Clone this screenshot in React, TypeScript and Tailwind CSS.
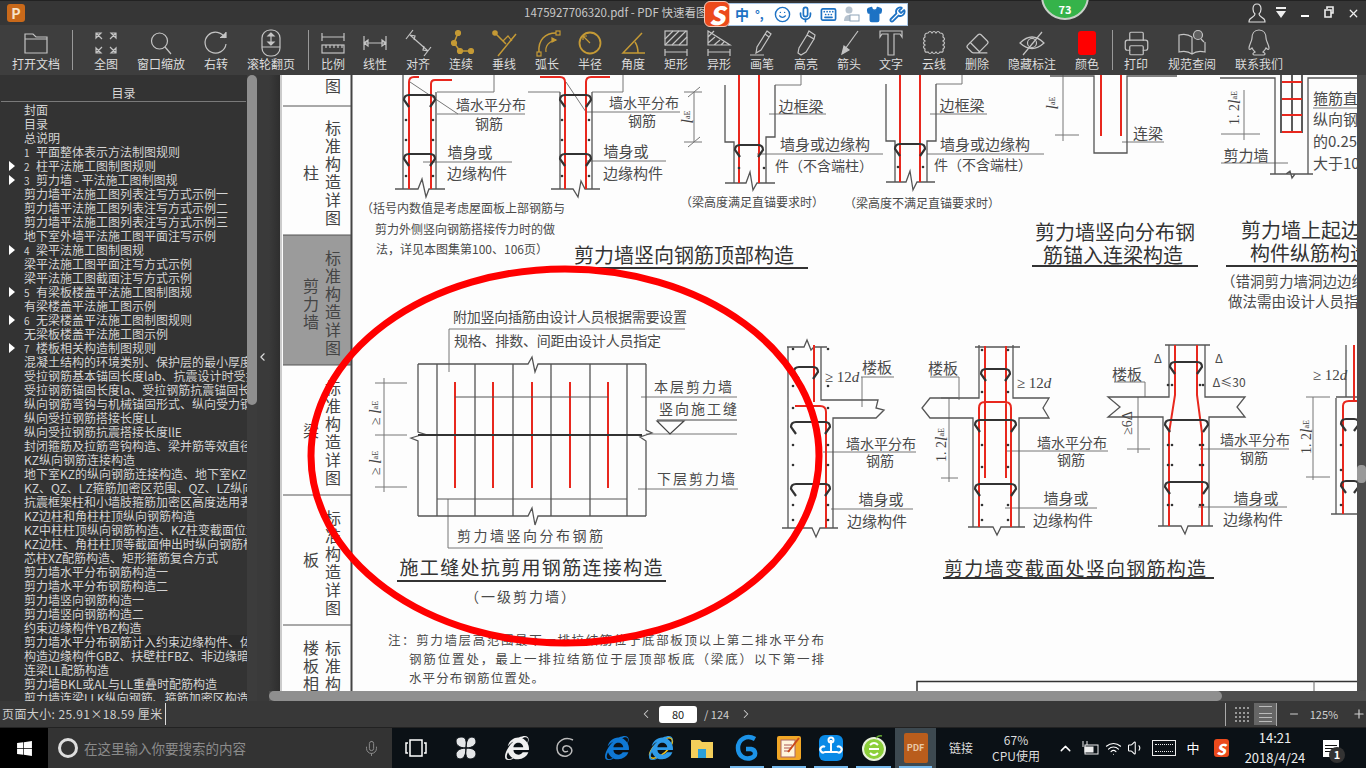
import React from 'react';
import {
  ChevronLeft, ChevronRight, ChevronUp, Eraser, Keyboard, Mic, Minus, Plus, Printer, Shirt, Smile, Volume1, Wifi, Wrench, X,
} from 'lucide-react';
import { FaInternetExplorer, FaWindows } from 'react-icons/fa';

const GOLD = '#c59a35';
const SERIF = 'Liberation Serif';

type IconProps = { children: React.ReactNode; color?: string };

function Ico({ children, color = '#c4c4c4' }: IconProps) {
  return (
    <svg width="30" height="30" viewBox="0 0 30 30" fill="none" stroke={color} strokeWidth="1.2">
      {children}
    </svg>
  );
}

const toolbarLeft: { label: string; w: string; icon: React.ReactNode }[] = [
  { label: '全图', w: 'w-[56px] ml-[5px]', icon: <Ico><path d="M5 5l6 6M5 5v5l5-5zM25 5l-6 6M25 5v5l-5-5zM5 25l6-6M5 25v-5l5 5zM25 25l-6-6M25 25v-5l-5 5z" /></Ico> },
  { label: '窗口缩放', w: 'w-[54px]', icon: <Ico><circle cx="13.500" cy="13" r="8" /><path d="M19 19l6 7" /></Ico> },
  { label: '右转', w: 'w-[56px]', icon: <Ico><path d="M24 10a10.500 10.500 0 1 0 1 6" /><path d="M19 9.500h6V4" fill="#c4c4c4" /></Ico> },
  { label: '滚轮翻页', w: 'w-[54px]', icon: <Ico><rect x="6" y="2" width="18" height="26" rx="8" /><path d="M6 19h18M15 7v8" /><path d="M15 5l-3 3h6zM15 17l-3-3h6z" fill="#c4c4c4" /></Ico> },
];

const toolbarMid: { label: string; w: string; icon: React.ReactNode }[] = [
  { label: '比例', w: 'w-[42px] ml-[3px]', icon: <Ico><path d="M4 5v8M26 5v8M4 9h22" /><rect x="4" y="17" width="22" height="8" /><path d="M8 17v3M12 17v3M16 17v3M20 17v3M24 17v3" /></Ico> },
  { label: '线性', w: 'w-[42px]', icon: <Ico><path d="M4 8v14M26 8v14M4 15h22M4 15l4-3v6zM26 15l-4-3v6z" /></Ico> },
  { label: '对齐', w: 'w-[44px]', icon: <Ico><path d="M10 2L3 11M28 19l-7 9M7 7l18 16M7 7l5 1-1 4M25 23l-5-1 1-4" /></Ico> },
  { label: '连续', w: 'w-[42px]', icon: <Ico color={GOLD}><path d="M12 5L8 15l6 8h11" strokeWidth="1.500" /><g fill={GOLD}><circle cx="12" cy="5" r="2.500" /><circle cx="8" cy="15" r="2.500" /><circle cx="14" cy="23" r="2.500" /><circle cx="25" cy="23" r="2.500" /></g></Ico> },
  { label: '垂线', w: 'w-[44px]', icon: <Ico color={GOLD}><path d="M27 6L9 28M6 5l11 11" strokeWidth="1.500" /><path d="M14 13l5-5 4 5" /><circle cx="6" cy="5" r="2.200" fill={GOLD} /></Ico> },
  { label: '弧长', w: 'w-[42px]', icon: <Ico color={GOLD}><path d="M7 24C6 12 13 5 24 5" strokeWidth="1.500" /><path d="M14 24c-1-6 3-11 10-12" /><rect x="5" y="24" width="4" height="4" /><rect x="24" y="3" width="4" height="4" /><path d="M24 12l-4-2v4z" fill={GOLD} /></Ico> },
  { label: '半径', w: 'w-[44px]', icon: <Ico color={GOLD}><circle cx="15" cy="15" r="10.500" strokeWidth="1.800" /><path d="M15 15L8 8M8 8v4M8 8h4" /></Ico> },
  { label: '角度', w: 'w-[42px]', icon: <Ico color={GOLD}><path d="M24 5L5 25h22M17 14c2 3 3 6 3 11" strokeWidth="1.500" /></Ico> },
  { label: '矩形', w: 'w-[44px]', icon: <Ico><rect x="4" y="3" width="22" height="14" /><path d="M4 11l8-8M4 17L18 3M11 17L25 3M18 17l8-8M4 21v7M26 21v7M4 24h22" /></Ico> },
  { label: '异形', w: 'w-[42px]', icon: <Ico><path d="M4 3l22 14H4zM4 9l6-6M4 15l7-6M10 17l6-5M17 17l3-3M4 21v7M26 21v7M4 24h22" /></Ico> },
  { label: '画笔', w: 'w-[44px]', icon: <Ico><path d="M20 3l4 3-10 16-5 3 1-6zM18 6l4 3M3 27h14" /></Ico> },
  { label: '高亮', w: 'w-[44px]', icon: <Ico><path d="M16 7l7 4-8 13-5 3-3-2 1-5zM18 3l6 4-1 4-7-4z" /></Ico> },
  { label: '箭头', w: 'w-[42px]', icon: <Ico><path d="M24 3L11 21" /><path d="M8 26l2-8 5 4z" fill="#c4c4c4" /></Ico> },
  { label: '文字', w: 'w-[42px]', icon: <Ico><path d="M4 3h22v6l-2-3h-6v21h-6V6H6L4 9z" /></Ico> },
  { label: '云线', w: 'w-[44px]', icon: <Ico><path d="M9 5q2-3 4 0q2-3 4 0q2-3 4 0q4 0 3 4q3 2 0 4q3 2 0 4q3 2 0 4q1 4-3 3q-2 3-4 0q-2 3-4 0q-2 3-4 0q-4 1-3-3q-3-2 0-4q-3-2 0-4q-3-2 0-4q-1-4 3-4z" /></Ico> },
  { label: '删除', w: 'w-[42px]', icon: <span className="flex h-[30px] w-[30px] items-center justify-center text-[#c4c4c4]"><Eraser size={25} strokeWidth={1.2} /></span> },
  { label: '隐藏标注', w: 'w-[68px]', icon: <Ico><path d="M3 15q12-12 24 0q-12 11-24 0z" /><circle cx="15" cy="15" r="4.500" /><path d="M25 4L6 27" /></Ico> },
  { label: '颜色', w: 'w-[42px]', icon: <span className="mt-[3px] block h-[24px] w-[18px] rounded-[3px] bg-[#ff0000]" /> },
];

const toolbarRight: { label: string; w: string; icon: React.ReactNode }[] = [
  { label: '打印', w: 'w-[46px]', icon: <span className="flex h-[30px] w-[30px] items-center justify-center text-[#c4c4c4]"><Printer size={27} strokeWidth={1.1} /></span> },
  { label: '规范查阅', w: 'w-[66px]', icon: <Ico><path d="M15 9C11 6 6 6 2 7v17c4-1 9-1 13 2 4-3 9-3 13-2V14M15 9v17" /><circle cx="21" cy="7" r="4.500" fill="#c4c4c4" fillOpacity=".25" /><path d="M24 11l3 3" /></Ico> },
  { label: '联系我们', w: 'w-[68px]', icon: <Ico><path d="M15 2c-5 0-7 4-7 8 0 3-3 7-3 10 0 2 1 2 3 0 1 2 2 3 3 4-2 1-3 2-1 3h10c2-1 1-2-1-3 1-1 2-2 3-4 2 2 3 2 3 0 0-3-3-7-3-10 0-4-2-8-7-8z" /></Ico> },
];

const tocRows: { text: string; num?: string; arrow?: boolean; active?: boolean }[] = [
  { text: '封面' },
  { text: '目录' },
  { text: '总说明' },
  { num: '1', text: '平面整体表示方法制图规则' },
  { num: '2', text: '柱平法施工图制图规则', arrow: true },
  { num: '3', text: '剪力墙 - 平法施工图制图规', arrow: true },
  { text: '剪力墙平法施工图列表注写方式示例一' },
  { text: '剪力墙平法施工图列表注写方式示例二' },
  { text: '剪力墙平法施工图列表注写方式示例三' },
  { text: '地下室外墙平法施工图平面注写示例' },
  { num: '4', text: '梁平法施工图制图规', arrow: true },
  { text: '梁平法施工图平面注写方式示例' },
  { text: '梁平法施工图截面注写方式示例' },
  { num: '5', text: '有梁板楼盖平法施工图制图规', arrow: true },
  { text: '有梁楼盖平法施工图示例' },
  { num: '6', text: '无梁楼盖平法施工图制图规则', arrow: true },
  { text: '无梁板楼盖平法施工图示例' },
  { num: '7', text: '楼板相关构造制图规则', arrow: true },
  { text: '混凝土结构的环境类别、保护层的最小厚度' },
  { text: '受拉钢筋基本锚固长度lab、抗震设计时受拉钢筋' },
  { text: '受拉钢筋锚固长度la、受拉钢筋抗震锚固长度' },
  { text: '纵向钢筋弯钩与机械锚固形式、纵向受力钢筋' },
  { text: '纵向受拉钢筋搭接长度LL' },
  { text: '纵向受拉钢筋抗震搭接长度llE' },
  { text: '封闭箍筋及拉筋弯钩构造、梁并筋等效直径' },
  { text: 'KZ纵向钢筋连接构造' },
  { text: '地下室KZ的纵向钢筋连接构造、地下室KZ的' },
  { text: 'KZ、QZ、LZ箍筋加密区范围、QZ、LZ纵向钢筋' },
  { text: '抗震框架柱和小墙肢箍筋加密区高度选用表' },
  { text: 'KZ边柱和角柱柱顶纵向钢筋构造' },
  { text: 'KZ中柱柱顶纵向钢筋构造、KZ柱变截面位置' },
  { text: 'KZ边柱、角柱柱顶等截面伸出时纵向钢筋构造' },
  { text: '芯柱XZ配筋构造、矩形箍筋复合方式' },
  { text: '剪力墙水平分布钢筋构造一' },
  { text: '剪力墙水平分布钢筋构造二' },
  { text: '剪力墙竖向钢筋构造一' },
  { text: '剪力墙竖向钢筋构造二' },
  { text: '约束边缘构件YBZ构造' },
  { text: '剪力墙水平分布钢筋计入约束边缘构件、体积', active: true },
  { text: '构造边缘构件GBZ、扶壁柱FBZ、非边缘暗柱' },
  { text: '连梁LL配筋构造' },
  { text: '剪力墙BKL或AL与LL重叠时配筋构造' },
  { text: '剪力墙连梁LLK纵向钢筋、箍筋加密区构造' },
];

function Tool({ label, w, icon }: { label: string; w: string; icon: React.ReactNode }) {
  return (
    <div className={`flex flex-col items-center ${w}`}>
      <div className="mt-[3px] h-[29px]">{icon}</div>
      <div className="whitespace-nowrap text-[12px] leading-[14px] text-[#dcdcdc]">{label}</div>
    </div>
  );
}

function T({ x, y, s = 14, w, anchor = 'middle', fill = '#4a4a4a', sp, children }: {
  x: number; y: number; s?: number; w?: number; anchor?: 'middle' | 'start'; fill?: string; sp?: number; children: React.ReactNode;
}) {
  return (
    <text x={x} y={y} fontSize={s} fill={fill} textAnchor={anchor} dominantBaseline="central" textLength={w} letterSpacing={sp}>
      {children}
    </text>
  );
}

function Stack({ x, y, step = 18, s = 16, chars, fill = '#444' }: { x: number; y: number; step?: number; s?: number; chars: string; fill?: string }) {
  return (
    <>
      {chars.split('').map((c, i) => (
        <T key={i} x={x} y={y + i * step} s={s} fill={fill}>{c}</T>
      ))}
    </>
  );
}

function RotT({ x, y, s = 14, children }: { x: number; y: number; s?: number; children: React.ReactNode }) {
  return (
    <text x={x} y={y} fontSize={s} fill="#444" textAnchor="middle" dominantBaseline="central" fontFamily={SERIF} transform={`rotate(-90 ${x} ${y})`}>
      {children}
    </text>
  );
}

function LaE() {
  return (
    <>
      <tspan fontStyle="italic" fontSize="16">l</tspan>
      <tspan fontSize="8">aE</tspan>
    </>
  );
}

function Twelve({ x, y }: { x: number; y: number }) {
  return (
    <text x={x} y={y} fontSize={15} fill="#444" textAnchor="middle" dominantBaseline="central" fontFamily={SERIF}>
      ≥ 12<tspan fontStyle="italic">d</tspan>
    </text>
  );
}

function Stirrup({ a, b, y }: { a: number; b: number; y: number }) {
  return <path d={`M${a + 3} ${y + 9}L${a - 2} ${y + 2}Q${a - 2} ${y - 3} ${a + 3} ${y - 3}H${b - 3}Q${b + 2} ${y - 3} ${b + 2} ${y + 2}L${b - 3} ${y + 9}`} fill="none" stroke="#333" strokeWidth="2.200" />;
}

function Dots({ xs, ys }: { xs: number[]; ys: number[] }) {
  return (
    <g fill="#333">
      {xs.map((x) => ys.map((y) => <circle key={`${x}-${y}`} cx={x} cy={y} r="1.300" />))}
    </g>
  );
}

// the scanned page, drawn in screenshot coordinates
function DrawingPage() {
  const thin = 'M437 92H494V75M528 92H560M592 92H623V75'
    + 'M410 82L458 114M437 114H525M423 162H512M566 82L586 112M587 112H680M587 161H666'
    + 'M769 114H826M775 85H801V75M757 154H883'
    + 'M694 92V142M684 92H702M684 142H702M688 97L700 87M688 147L700 137'
    + 'M930 114H987M936 84H962V75M927 154H1044'
    + 'M1055 135H1079M1063 75V141M1122 142H1164'
    + 'M1221 134H1260M1244 90V140M1221 163H1288M1313 108H1363'
    + 'M449 329H685M449 329V372M448 499V548H603'
    + 'M375 383H407M375 435H407M375 487H407M384 378V492'
    + 'M641 397H737M646 434H737M638 489H738'
    + 'M823 452H916M831 509H913M861 377H894M862 377V407'
    + 'M1005 451H1108M1005 508H1097M930 377H959M959 377V400M941 398H958M949 398V482M941 478H958'
    + 'M1200 449H1289M1198 507H1287M1114 382H1145M1145 382V397M1127 449H1150M1138 397V453'
    + 'M1306 397H1330M1313 397V480M1306 477H1330';
  const walls = 'M403 75V189M436 92V189M395 189H418L422 179L426 197L429 189H445'
    + 'M560 92V189M592 92V189M551 189H573L578 197L581 181L585 189H600'
    + 'M725 85V142H734V183M775 85V137H766V183M725 183H746L750 172L753 190L757 183H775'
    + 'M886 84V141H895V182M936 84V141H927V182M886 182H906L910 171L913 190L917 182H935'
    + 'M1050 76H1094V153H1127V76H1177'
    + 'M1220 78H1275V174H1308V78H1363M1270 174H1286L1290 171L1292 178L1295 174H1313'
    + 'M418 364V432L424 434L411 438L418 441V516M646 364V430L652 433L640 437L646 441V516M418 516H528L532 508L535 525L538 516H646M418 364H528L532 357L535 372L538 364H646'
    + 'M437 364V516M475 364V516M513 364V516M551 364V516M590 364V516M627 364V516'
    + 'M788 347V528M821 347V400H878L876 408L884 410L876 418H833V528M787 347H804L807 340L811 350L814 347H827M782 528H812L816 537L820 528H838'
    + 'M979 345V398H930L922 408L930 418H973V527M1013 345V398H1049L1043 408L1049 418H1019V527M968 527H993L997 535L1001 527H1025M975 347H1020'
    + 'M1169 345V397H1108L1120 407L1108 417H1163V526M1205 345V397H1245L1237 407L1245 417H1209V526M1158 526H1181L1185 534L1188 526H1213M1165 345H1210'
    + 'M1336 398V514M1346 345V397M1336 397H1357M1331 514H1357';
  const red = 'M409 189V82Q409 77 414 77H419M431 189V84Q431 80 435 80H452'
    + 'M565 189V82Q565 77 560 77H540M586 189V82Q586 77 591 77H610'
    + 'M739 75V183M759 75V183M900 75V182M920 75V182M1101 75V136M1121 75V136'
    + 'M455 382V488M493 382V488M532 382V488M570 382V488M608 382V488'
    + 'M1282 82H1302M1282 99H1302M1282 115H1302M1282 132H1302'
    + 'M814 345V402M795 406H820Q826 406 826 412V528'
    + 'M985 346V478M1006 346V478M979 527V408Q979 402 985 402H1005Q1011 402 1011 408V527'
    + 'M1175 345V395L1169 433V526M1197 345V395L1202 433V526'
    + 'M1354 345V401M1343 514V406Q1343 401 1349 401H1357';
  return (
    <svg viewBox="280 75 1077 616" className="block h-[616px] w-[1077px] bg-[#fdfdfd]">
      <rect x="283" y="235" width="68" height="130" fill="#9b9b9b" />
      <path d="M281 75V691" stroke="#999" />
      <path d="M351.500 75V691" stroke="#444" strokeWidth="2" />
      <path d="M283 106H351M283 235H351M283 365H351M283 495H351M283 625H351" stroke="#555" />
      <Stack x={333} y={85} chars="图" />
      <Stack x={333} y={127} chars="标准构造详图" />
      <Stack x={311} y={172} chars="柱" />
      <Stack x={333} y={257} chars="标准构造详图" />
      <Stack x={311} y={285} chars="剪力墙" />
      <Stack x={333} y={387} chars="标准构造详图" />
      <Stack x={311} y={430} chars="梁" />
      <Stack x={333} y={517} chars="标准构造详图" />
      <Stack x={311} y={559} chars="板" />
      <Stack x={333} y={647} chars="标准构" />
      <Stack x={311} y={647} chars="楼板相" />

      <path d={thin} fill="none" stroke="#777" strokeWidth="1" />
      <path d={walls} fill="none" stroke="#555" strokeWidth="1.300" />
      <path d="M1281 75V133M1292 75V133M1302 75V133" stroke="#333" strokeWidth="1.600" />
      <path d={red} fill="none" stroke="#e8281e" strokeWidth="2" />
      <path d="M455 397H608M437 499H627" stroke="#555" />
      <path d="M418 435H642" stroke="#333" strokeWidth="2" />
      <path d="M657 421H684L670 434Z" fill="none" stroke="#444" strokeWidth="1.200" />
      <path d="M657 420H737" stroke="#444" />

      <Stirrup a={406} b={433} y={98} />
      <Stirrup a={406} b={433} y={157} />
      <Stirrup a={562} b={589} y={98} />
      <Stirrup a={562} b={589} y={157} />
      <Stirrup a={737} b={761} y={148} />
      <Stirrup a={897} b={923} y={147} />
      <Stirrup a={793} b={828} y={425} />
      <Stirrup a={793} b={828} y={487} />
      <Stirrup a={796} b={816} y={370} />
      <Stirrup a={983} b={1008} y={372} />
      <Stirrup a={977} b={1014} y={423} />
      <Stirrup a={977} b={1014} y={487} />
      <Stirrup a={1172} b={1200} y={365} />
      <Stirrup a={1167} b={1206} y={423} />
      <Stirrup a={1167} b={1206} y={485} />
      <Stirrup a={1343} b={1357} y={422} />
      <Stirrup a={1343} b={1357} y={484} />
      <Dots xs={[406, 433]} ys={[120, 140, 176]} />
      <Dots xs={[562, 589]} ys={[120, 140, 176]} />
      <Dots xs={[739, 764]} ys={[168]} />
      <Dots xs={[898, 923]} ys={[167]} />
      <Dots xs={[793, 828]} ys={[349, 386, 408, 445, 465, 505, 520]} />
      <Dots xs={[982, 1008]} ys={[350, 392, 445, 467, 505, 520]} />
      <Dots xs={[1172, 1200, 1168, 1203]} ys={[385, 445, 465, 505]} />
      <Dots xs={[1341]} ys={[445, 470, 505]} />

      <T x={491} y={104} s={14}>墙水平分布</T><T x={489} y={123} s={14}>钢筋</T>
      <T x={470} y={151} s={15}>墙身或</T><T x={477} y={172} s={15}>边缘构件</T>
      <T x={644} y={102} s={14}>墙水平分布</T><T x={642} y={120} s={14}>钢筋</T>
      <T x={626} y={150} s={15}>墙身或</T><T x={633} y={172} s={15}>边缘构件</T>
      <T x={801} y={105} s={15}>边框梁</T>
      <T x={825} y={143} s={15}>墙身或边缘构</T><T x={824} y={165} s={14}>件（不含端柱）</T>
      <T x={752} y={201} s={12}>（梁高度满足直锚要求时）</T>
      <T x={962} y={104} s={15}>边框梁</T>
      <T x={985} y={143} s={15}>墙身或边缘构</T><T x={983} y={164} s={14}>件（不含端柱）</T>
      <T x={922} y={202} s={12}>（梁高度不满足直锚要求时）</T>
      <T x={1148} y={132} s={15}>连梁</T>
      <T x={1246} y={154} s={15}>剪力墙</T>
      <RotT x={687} y={117}><LaE /></RotT>
      <RotT x={1052} y={103}><LaE /></RotT>
      <RotT x={1234} y={108}>1. 2<LaE /></RotT>
      <T x={1313} y={97} s={15} anchor="start">箍筋直径</T>
      <T x={1313} y={118} s={15} anchor="start">纵向钢筋</T>
      <T x={1313} y={140} s={15} anchor="start">的0.25倍</T>
      <T x={1313} y={162} s={15} anchor="start">大于100</T>

      <T x={463} y={207} s={12}>（括号内数值是考虑屋面板上部钢筋与</T>
      <T x={465} y={228} s={12}>剪力外侧竖向钢筋搭接传力时的做</T>
      <T x={462} y={248} s={12}>法，详见本图集第100、106页）</T>

      <T x={684} y={254} s={20} fill="#333">剪力墙竖向钢筋顶部构造</T>
      <T x={1115} y={231} s={20} fill="#333">剪力墙竖向分布钢</T>
      <T x={1113} y={254} s={20} fill="#333">筋锚入连梁构造</T>
      <T x={1241} y={229} s={20} fill="#333" anchor="start">剪力墙上起边缘</T>
      <T x={1250} y={252} s={20} fill="#333" anchor="start">构件纵筋构造</T>
      <T x={1221} y={280} s={14.500} anchor="start">（错洞剪力墙洞边边缘</T>
      <T x={1228} y={300} s={14.500} anchor="start">做法需由设计人员指定</T>
      <path d="M572 268H808M1032 266H1198M1226 266H1357M397 581H666M943 578H1214" stroke="#333" strokeWidth="2" />

      <T x={570} y={316} s={14} w={234}>附加竖向插筋由设计人员根据需要设置</T>
      <T x={454} y={340} s={14} anchor="start" w={207}>规格、排数、间距由设计人员指定</T>
      <T x={693} y={386} s={14} w={78}>本层剪力墙</T>
      <T x={698} y={408} s={14} w={78}>竖向施工缝</T>
      <T x={696} y={478} s={14} w={78}>下层剪力墙</T>
      <T x={530} y={535} s={14} w={146}>剪力墙竖向分布钢筋</T>
      <T x={531} y={566} s={19} w={263} fill="#333">施工缝处抗剪用钢筋连接构造</T>
      <T x={521} y={596} s={14} sp={2}>（一级剪力墙）</T>
      <RotT x={375} y={413}>≥ <LaE /></RotT>
      <RotT x={375} y={463}>≥ <LaE /></RotT>

      <T x={388} y={639} s={12.500} anchor="start" w={436}>注：剪力墙层高范围最下一排拉结筋位于底部板顶以上第二排水平分布</T>
      <T x={409} y={658} s={12.500} anchor="start" w={415}>钢筋位置处，最上一排拉结筋位于层顶部板底（梁底）以下第一排</T>
      <T x={409} y={677} s={12.500} anchor="start" w={135}>水平分布钢筋位置处。</T>

      <Twelve x={842} y={377} />
      <T x={877} y={366} s={15}>楼板</T>
      <T x={881} y={443} s={14}>墙水平分布</T><T x={880} y={460} s={14}>钢筋</T>
      <T x={881} y={498} s={15}>墙身或</T><T x={877} y={520} s={15}>边缘构件</T>
      <T x={943} y={367} s={15}>楼板</T>
      <Twelve x={1034} y={383} />
      <RotT x={941} y={445}>1. 2<LaE /></RotT>
      <T x={1072} y={442} s={14}>墙水平分布</T><T x={1071} y={459} s={14}>钢筋</T>
      <T x={1066} y={497} s={15}>墙身或</T><T x={1063} y={519} s={15}>边缘构件</T>
      <T x={1127} y={373} s={15}>楼板</T>
      <T x={1158} y={357} s={12}>Δ</T><T x={1219} y={357} s={12}>Δ</T>
      <T x={1229} y={381} s={12}>Δ≤30</T>
      <RotT x={1127} y={423}>≥6Δ</RotT>
      <T x={1255} y={439} s={14}>墙水平分布</T><T x={1254} y={457} s={14}>钢筋</T>
      <T x={1256} y={497} s={15}>墙身或</T><T x={1253} y={518} s={15}>边缘构件</T>
      <Twelve x={1330} y={375} />
      <RotT x={1306} y={437}>1. 2<LaE /></RotT>
      <T x={1075} y={567} s={19} w={262} fill="#333">剪力墙变截面处竖向钢筋构造</T>

      <path d="M917 691V681.500H1357" fill="none" stroke="#333" strokeWidth="1.500" />
      <path d="M1314 681V691" stroke="#666" />

      <ellipse cx="565" cy="456" rx="254" ry="187" fill="none" stroke="#ff0000" strokeWidth="7" />
    </svg>
  );
}

function TaskIcon({ active, running, w, children }: { active?: boolean; running?: boolean; w: string; children: React.ReactNode }) {
  return (
    <div className={`relative flex h-full shrink-0 items-center justify-center ${w} ${active ? 'bg-[#3d4950]' : ''}`}>
      {children}
      {running && <span className="absolute bottom-0 left-[4px] right-[4px] h-[2px] bg-[#76b9ed]" />}
    </div>
  );
}

export default function App() {
  return (
    <div className="flex h-[768px] w-[1366px] flex-col overflow-hidden bg-[#333] font-['Noto_Sans_CJK_SC','Liberation_Sans',sans-serif]">
      {/* title bar */}
      <div className="relative flex h-[25px] shrink-0 items-center border-t border-[#222] bg-[#363636] pl-[7px]">
        <div className="flex h-[18px] w-[18px] items-center justify-center rounded-[3px] bg-[#c9691a] text-[14px] font-bold leading-none text-[#f7e3c9]">P</div>
        <div className="flex-1 pl-[499px] text-[11.500px] leading-none text-[#c8c8c8]">1475927706320.pdf - PDF 快速看图</div>
        <div className="flex items-center pr-[1px] text-[#eee]">
          <svg width="24" height="20" viewBox="0 0 24 20" fill="none" stroke="#ddd" strokeWidth="1.200"><path d="M12 1c-3 0-4 2.500-4 5 0 2 1 4 2 5 0 2-3 3-5 5-1 1-1 3-1 3h16s0-2-1-3c-2-2-5-3-5-5 1-1 2-3 2-5 0-2.500-1-5-4-5z" /></svg>
          <svg width="24" height="14" viewBox="0 0 24 14" fill="#eee"><path d="M7 1h10v2H7zM7 5h10l-5 7z" /></svg>
          <div className="flex w-[24px] justify-center"><span className="mt-[6px] block h-[2px] w-[8px] bg-white" /></div>
          <svg width="24" height="14" viewBox="0 0 24 14" fill="none" stroke="#eee" strokeWidth="1.600"><path d="M10 3V1h6v6h-2M8 4h6v7H8z" /></svg>
          <div className="flex w-[24px] justify-center"><X size={13} strokeWidth={2.400} /></div>
        </div>
        {/* score badge */}
        <div className="absolute left-[1041px] top-[-29px] flex h-[48px] w-[48px] items-end justify-center rounded-full border-2 border-[#c8d0c8] bg-[#35b34a] pb-[2px] text-[11px] font-bold leading-[14px] text-white">73</div>
      </div>

      {/* sogou input bar */}
      <div className="absolute left-[704px] top-[1px] z-10 flex h-[26px] w-[204px] items-center">
        <div className="z-10 flex h-[26px] w-[26px] items-center justify-center rounded-[6px] border border-[#f7c9b8] bg-[#ec4a1c] text-[25px] font-black italic leading-none text-white">S</div>
        <div className="ml-[-2px] flex h-[23px] flex-1 items-center gap-[6px] border border-[#a9c6e4] bg-white pl-[6px] text-[#1d72c4]">
          <span className="text-[14px] font-bold leading-none">中</span>
          <span className="w-[13px] text-[12px] font-bold leading-none">°,</span>
          <Smile size={17} strokeWidth={2} />
          <Mic size={17} strokeWidth={2.400} />
          <Keyboard size={17} strokeWidth={2.400} />
          <svg width="17" height="17" viewBox="0 0 17 17"><circle cx="6" cy="4" r="3.500" fill="#b7c3cf" /><path d="M1 15c0-4 2-6 5-6h2v6z" fill="#b7c3cf" /><rect x="7" y="9" width="9" height="6" fill="#fff" stroke="#8ea4b8" /></svg>
          <Shirt size={17} strokeWidth={2} fill="#1d72c4" />
          <Wrench size={17} strokeWidth={2.600} />
        </div>
      </div>

      {/* toolbar */}
      <div className="flex h-[50px] shrink-0 bg-[#3e3e3e]">
        <Tool label="打开文档" w="w-[72px]" icon={<Ico><path d="M4 25V6h8l3 3h11v16zM4 11h22" /></Ico>} />
        <span className="mt-[5px] h-[40px] w-px bg-[#999]" />
        {toolbarLeft.map((t) => <Tool key={t.label} {...t} />)}
        <span className="ml-[10px] mt-[5px] h-[40px] w-px bg-[#999]" />
        {toolbarMid.map((t) => <Tool key={t.label} {...t} />)}
        <span className="ml-[4px] mt-[5px] h-[40px] w-px bg-[#999]" />
        {toolbarRight.map((t) => <Tool key={t.label} {...t} />)}
      </div>

      {/* main */}
      <div className="flex h-[626px] shrink-0">
        <div className="w-[247px] shrink-0 overflow-hidden bg-[#333]">
          <div className="mx-px h-[27px] border-b border-[#7a7a7a] pt-[11px] text-center text-[12px] leading-[14px] text-[#d8d8d8]">目录</div>
          <div className="pt-px">
            {tocRows.map((r, i) => (
              <div key={i} className="relative h-[14px] whitespace-nowrap pl-[24px] text-[12px] leading-[14px] text-[#d4d4d4]">
                {r.arrow && <span className="absolute left-[9px] top-[2px] h-0 w-0 border-y-[5px] border-l-[6px] border-y-transparent border-l-white" />}
                <span className={r.active ? 'ml-[-3px] block bg-[#2c2c2c] pl-[3px]' : ''}>
                  {r.num && <span className="inline-block w-[12px] text-[10px]">{r.num}</span>}
                  {r.text}
                </span>
              </div>
            ))}
          </div>
        </div>
        <div className="w-[10px] shrink-0 bg-[#3c3c3c]">
          <div className="h-[330px] rounded-[5px] bg-[#8f8f8f]" />
        </div>
        <div className="flex w-[12px] shrink-0 items-center bg-[#3a3a3a] text-[#ddd]">
          <ChevronLeft size={14} strokeWidth={2} className="ml-[-1px] mt-[-62px]" />
        </div>
        <div className="flex min-w-0 flex-1 flex-col">
          <div className="flex h-[616px]">
            <div className="w-[11px] shrink-0 bg-gradient-to-r from-[#3a3a3a] to-[#2e2e2e]" />
            <DrawingPage />
            <div className="w-[9px] shrink-0 bg-[#4c4c4c]">
              <div className="mt-[390px] h-[18px] rounded-[4px] bg-[#9a9a9a]" />
            </div>
          </div>
          <div className="h-[10px] bg-[#4e4e4e]">
            <div className="h-[10px] w-[953px] rounded-[5px] bg-[#8f8f8f]" />
          </div>
        </div>
      </div>

      {/* status bar */}
      <div className="relative flex h-[27px] shrink-0 items-center border-b border-[#222] bg-[#383838] text-[12px] text-[#cfcfcf]">
        <div className="ml-[2px] w-[164px] whitespace-nowrap border-r border-[#ddd] leading-[22px] tracking-[0.4px]">页面大小: 25.91×18.59 厘米</div>
        <ChevronLeft size={14} strokeWidth={1.800} className="ml-[473px]" />
        <div className="ml-[6px] flex h-[17px] w-[38px] items-center justify-center rounded-[3px] bg-white text-[11px] text-[#222]">80</div>
        <div className="ml-[7px] w-[31px] text-[11px]">/ 124</div>
        <ChevronRight size={14} strokeWidth={1.800} className="ml-[4px]" />
        <div className="ml-[472px] h-[23px] w-px bg-[#aaa]" />
        <div className="ml-[6px] flex h-[21px] w-[19px] justify-center gap-[2px] py-[3px]">
          <span className="w-[6px] border-x-[2px] border-dotted border-[#999]" />
          <span className="w-[6px] border-x-[2px] border-dotted border-[#999]" />
        </div>
        <div className="ml-[3px] flex h-[22px] w-[22px] flex-col items-center justify-center gap-[3px] bg-[#666]">
          <span className="h-[8px] w-[13px] border-y border-[#bbb]" />
          <span className="h-[5px] w-[13px] border-y border-[#bbb]" />
        </div>
        <div className="h-[23px] w-px bg-[#aaa]" />
        <Minus size={12} className="ml-[11px]" />
        <div className="ml-[4px] w-[40px] text-center text-[11px]">125%</div>
        <Plus size={14} className="ml-[8px]" />
      </div>

      {/* taskbar */}
      <div className="flex h-[40px] shrink-0 items-center bg-[#0b1116] text-white">
        <div className="flex h-full w-[48px] items-center justify-center bg-black"><FaWindows size={17} /></div>
        <div className="flex h-full w-[344px] items-center bg-[#333] pl-[10px]">
          <span className="h-[20px] w-[20px] rounded-full border-[3px] border-[#ddd]" />
          <span className="ml-[6px] flex-1 text-[13.500px] text-[#8b8b8b]">在这里输入你要搜索的内容</span>
          <Mic size={17} strokeWidth={1.400} className="mr-[12px] text-[#8b8b8b]" />
        </div>
        <div className="flex h-full">
          <TaskIcon w="w-[48px]">
            <svg width="22" height="18" viewBox="0 0 22 18" fill="none" stroke="#fff" strokeWidth="1.500"><rect x="5" y="1" width="12" height="16" /><path d="M3 4H1v10h2M19 4h2v10h-2" /></svg>
          </TaskIcon>
          <TaskIcon w="w-[51px]">
            <svg width="22" height="24" viewBox="0 0 22 24" fill="#e4e6e8"><path d="M11 12C3 12 1 8 1 5s3-4 6-4 5 3 4 11zM11 12c0-8 3-11 6-11s4 3 4 5-3 6-10 6zM11 12c8 0 10 3 10 6s-3 5-6 5-5-3-4-11zM11 12c0 8-3 11-6 11s-4-3-4-5 3-6 10-6z" stroke="#0b1116" /></svg>
          </TaskIcon>
          <TaskIcon w="w-[51px]"><FaInternetExplorer size={24} color="#f0f0f0" /></TaskIcon>
          <TaskIcon w="w-[48px]">
            <svg width="22" height="22" viewBox="0 0 22 22" fill="none" stroke="#bbb" strokeWidth="1.500"><path d="M18 3C10-1 2 4 2 11s6 9 10 8 6-5 4-8-7-3-8 0 2 5 5 3" /></svg>
          </TaskIcon>
          <TaskIcon w="w-[54px]"><FaInternetExplorer size={24} color="#0f78d4" /></TaskIcon>
          <TaskIcon w="w-[34px]">
            <svg width="30" height="30" viewBox="0 0 30 30" className="absolute" fill="none" stroke="#f2c21a" strokeWidth="1.500"><ellipse cx="15" cy="15" rx="14" ry="6" transform="rotate(-40 15 15)" /></svg>
            <FaInternetExplorer size={24} color="#2f9be8" className="relative" />
          </TaskIcon>
          <TaskIcon w="w-[48px]">
            <svg width="24" height="22" viewBox="0 0 24 22"><path d="M1 3h9l2 2h11v16H1z" fill="#f4cf5b" /><rect x="8" y="12" width="8" height="9" fill="#2a9fd8" /></svg>
          </TaskIcon>
          <TaskIcon running w="w-[42px]">
            <svg width="26" height="28" viewBox="0 0 26 28" fill="none" stroke="#1c93e8" strokeWidth="4.500"><path d="M21 5C12 0 4 6 4 14s7 12 13 10 5-8 0-9h-5" /></svg>
          </TaskIcon>
          <TaskIcon running w="w-[42px]">
            <svg width="26" height="26" viewBox="0 0 26 26"><rect x="1" y="1" width="24" height="24" rx="2" fill="#f2a726" /><rect x="5" y="5" width="14" height="17" fill="#fff5dc" stroke="#a66" /><path d="M8 10h8M8 13h8M8 16h6" stroke="#a55" /><path d="M23 3L12 17" stroke="#c9491a" strokeWidth="2" /></svg>
          </TaskIcon>
          <TaskIcon running w="w-[42px]">
            <svg width="26" height="28" viewBox="0 0 26 28"><rect x="1" y="1" width="24" height="26" rx="6" fill="#0a8ae6" /><path d="M13 6v12M7 13a3 3 0 1 0 0 5h12a3 3 0 1 0 0-5" fill="none" stroke="#fff" strokeWidth="2" /><circle cx="13" cy="6" r="2.500" fill="none" stroke="#fff" strokeWidth="2" /></svg>
          </TaskIcon>
          <TaskIcon running w="w-[43px]">
            <svg width="26" height="28" viewBox="0 0 26 28"><circle cx="13" cy="15" r="11" fill="#8ccf3a" stroke="#e9f2dc" strokeWidth="2" /><path d="M8 15h10M9 11q4-4 8 0M9 19q4 4 8 0" stroke="#fff" strokeWidth="2" fill="none" /><path d="M15 4q3-3 6-2" stroke="#6a3" strokeWidth="1.500" fill="none" /></svg>
          </TaskIcon>
          <TaskIcon active running w="w-[41px]">
            <div className="flex h-[30px] w-[24px] items-center justify-center rounded-[2px] bg-[#b95d1c] text-[9px] font-bold text-[#e9c9a6]">PDF</div>
          </TaskIcon>
        </div>
        <div className="ml-[13px] w-[24px] whitespace-nowrap text-[12px] text-[#ddd]">链接</div>
        <div className="ml-[8px] w-[70px] text-center text-[12px] leading-[16px] text-[#ddd]">
          <div>67%</div>
          <div>CPU使用</div>
        </div>
        <div className="ml-[1px] flex w-[26px] justify-center"><ChevronUp size={17} /></div>
        <div className="flex w-[24px] justify-center">
          <svg width="18" height="16" viewBox="0 0 18 16" fill="none" stroke="#eee"><rect x="4" y="5" width="13" height="9" /><rect x="4" y="7" width="8" height="5" fill="#eee" /><path d="M2 1v6M6 1v4" /></svg>
        </div>
        <div className="flex w-[23px] justify-center"><Wifi size={17} strokeWidth={1.500} /></div>
        <div className="flex w-[22px] justify-center"><Volume1 size={18} strokeWidth={1.400} /></div>
        <div className="flex w-[34px] justify-center">
          <div className="flex h-[16px] w-[24px] items-center justify-center border border-[#eee]"><span className="h-[8px] w-[18px] border-y border-dotted border-[#eee]" /></div>
        </div>
        <div className="w-[24px] text-center text-[13px]">中</div>
        <div className="flex w-[32px] justify-center">
          <div className="flex h-[18px] w-[15px] items-center justify-center rounded-[3px] bg-[#ec4a1c] text-[15px] font-black italic leading-none">S</div>
        </div>
        <div className="w-[76px] text-center text-[13px] leading-[20px] text-[#eee]">
          <div>14:21</div>
          <div>2018/4/24</div>
        </div>
        <div className="relative ml-[10px] flex h-[17px] w-[16px] flex-col justify-center gap-[2px] bg-white px-[2px]">
          <span className="h-px bg-[#111]" />
          <span className="h-px bg-[#111]" />
          <span className="h-px bg-[#111]" />
          <span className="absolute left-[6px] top-[7px] flex h-[16px] w-[16px] items-center justify-center rounded-full bg-[#333] text-[11px] font-bold text-white">1</span>
        </div>
      </div>
    </div>
  );
}
